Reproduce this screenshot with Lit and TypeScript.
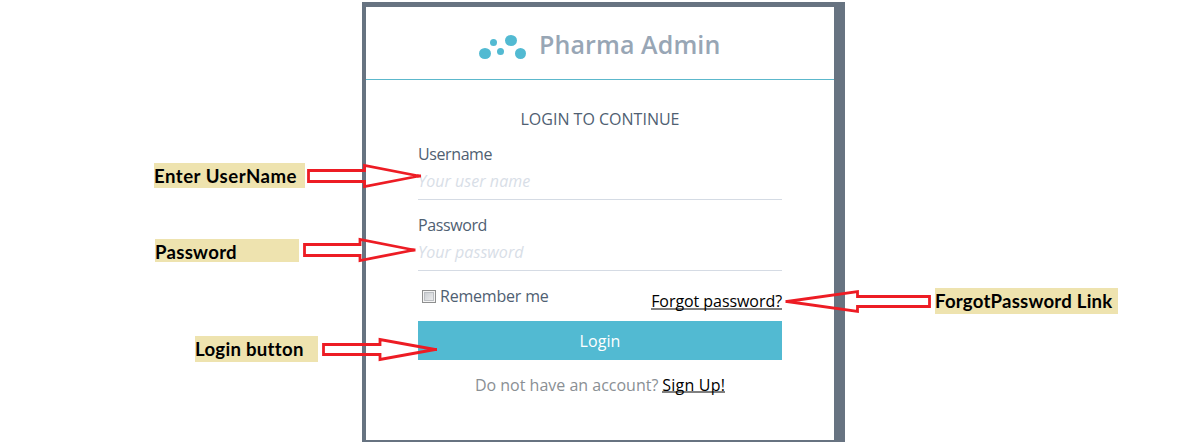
import { LitElement, html, css, svg } from "lit";
import { customElement } from "lit/decorators.js";

const callouts = [
  { cls: "user", text: "Enter UserName" },
  { cls: "pass", text: "Password" },
  { cls: "login", text: "Login button" },
  { cls: "forgot-note", text: "ForgotPassword Link" },
];

const arrows = [
  "M308.5 170.5H364.5V165.5L419 176L364.5 186.5V181.5H308.5Z",
  "M304.5 244.5H360V239.5L414 250L360 260.5V255.5H304.5Z",
  "M323.5 344.5H380V339.5L435 349.5L380 359.5V354.5H323.5Z",
  "M929.5 296.5H857.5V291.5L787 301.5L857.5 311.5V306.5H929.5Z",
];

const tips = ["M417 176H421", "M411 250H415.5", "M432 349.5H437", "M790 301.5H785.5"];

@customElement("app-root")
export class AppRoot extends LitElement {
  static styles = css`
    :host {
      display: block;
      position: relative;
      box-sizing: border-box;
      width: 1189px;
      height: 443px;
      padding: 2px 0 0 362px;
      overflow: hidden;
      background: #fff;
      font: 16px/20px "Open Sans", "Noto Sans", sans-serif;
      color: #4f6072;
    }
    .card {
      box-sizing: border-box;
      width: 483px;
      height: 440px;
      border: solid #677381;
      border-width: 5px 11px 2px 4px;
      background: #fff;
    }
    .brand {
      display: flex;
      box-sizing: border-box;
      height: 73px;
      padding: 0 0 0 113px;
      border-bottom: 1px solid #5cb8cc;
    }
    .logo { width: 48px; height: 25px; margin-top: 28px; }
    .name {
      margin: 21px 0 0 12px;
      font-size: 25px;
      line-height: 32px;
      font-weight: 600;
      letter-spacing: 0.1px;
      color: #98a6b5;
      white-space: nowrap;
    }
    form {
      display: flex;
      flex-direction: column;
      width: 364px;
      margin: 29px 0 0 52px;
    }
    .title { align-self: center; height: 20px; white-space: nowrap; }
    .field {
      box-sizing: border-box;
      height: 56px;
      margin-top: 15px;
      border-bottom: 1px solid #d5dbe4;
    }
    .label { letter-spacing: -0.4px; }
    .hint {
      margin-top: 7px;
      font-style: italic;
      letter-spacing: 0.05px;
      color: #d8dee7;
    }
    .options {
      display: flex;
      justify-content: space-between;
      height: 35px;
      margin-top: 15px;
    }
    .remember { display: flex; letter-spacing: -0.2px; }
    .box {
      box-sizing: border-box;
      width: 14px;
      height: 13px;
      margin: 4px 4px 0 4px;
      border: 1px solid #8e8f8f;
      background: linear-gradient(135deg, #c4c8cd, #f3f3f3);
      box-shadow: inset 0 0 0 1px #f4f4f4, inset 0 0 0 2px #bcbfc3;
    }
    .link {
      height: 16px;
      color: #000;
      border-bottom: 2px solid #808080;
      white-space: nowrap;
    }
    .forgot { margin-top: 6px; line-height: 19px; letter-spacing: -0.06px; }
    .button {
      height: 39px;
      line-height: 41px;
      text-align: center;
      letter-spacing: 0.1px;
      color: #fff;
      background: #52bad2;
    }
    .signup {
      display: flex;
      justify-content: center;
      gap: 4px;
      margin-top: 15px;
      color: #8a8f94;
      white-space: nowrap;
    }
    .signup .link { letter-spacing: 0.2px; }
    .note {
      position: absolute;
      box-sizing: border-box;
      background: #eee3af;
      color: #000;
      font: 700 18.6px/26px Lato, sans-serif;
      letter-spacing: 0.28px;
      white-space: nowrap;
    }
    .user { left: 154px; top: 163px; width: 151px; height: 25px; letter-spacing: 0.5px; }
    .pass { left: 155px; top: 239px; width: 144px; height: 23px; }
    .login { left: 195px; top: 336px; width: 123px; height: 26px; }
    .forgot-note { left: 935px; top: 288px; width: 183px; height: 26px; letter-spacing: 0.22px; }
    .arrows { position: absolute; left: 0; top: 0; }
  `;

  render() {
    return html`
      <div class="card">
        <div class="brand">
          <svg class="logo" viewBox="0 0 48 25" fill="#52bad2">
            <ellipse cx="6" cy="18.5" rx="6" ry="5.5" />
            <circle cx="14.5" cy="7.5" r="3.5" />
            <circle cx="21.5" cy="16.5" r="3.5" />
            <ellipse cx="32" cy="5.5" rx="6" ry="5.5" />
            <circle cx="41.5" cy="18.5" r="5.5" />
          </svg>
          <div class="name">Pharma Admin</div>
        </div>
        <form>
          <div class="title">LOGIN TO CONTINUE</div>
          <div class="field"><div class="label">Username</div><div class="hint">Your user name</div></div>
          <div class="field"><div class="label">Password</div><div class="hint">Your password</div></div>
          <div class="options">
            <div class="remember"><span class="box"></span><span>Remember me</span></div>
            <span class="link forgot">Forgot password?</span>
          </div>
          <div class="button">Login</div>
          <div class="signup"><span>Do not have an account?</span><span class="link">Sign Up!</span></div>
        </form>
      </div>
      ${callouts.map((c) => html`<div class="note ${c.cls}">${c.text}</div>`)}
      <svg class="arrows" width="1189" height="443" fill="none" stroke="#ed1c24" stroke-width="3">
        ${arrows.map((d) => svg`<path stroke-width="2.8" d=${d} />`)}
        ${tips.map((d) => svg`<path d=${d} />`)}
      </svg>
    `;
  }
}
